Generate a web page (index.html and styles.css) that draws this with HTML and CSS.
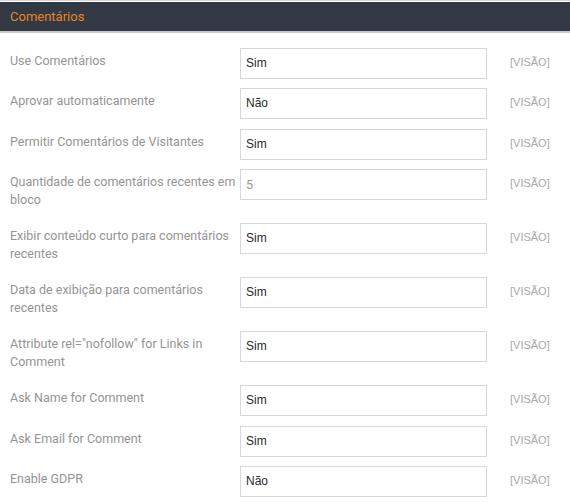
FILE: index.html
```html
<!DOCTYPE html>
<html>
<head>
<meta charset="utf-8">
<link rel="stylesheet" href="styles.css">
</head>
<body>
<div class="panel">
  <div class="panel-head">Comentários</div>
  <div class="form">
    <div class="row"><div class="label">Use Comentários</div><div class="field">Sim</div><div class="scope">[VISÃO]</div></div>
    <div class="row"><div class="label">Aprovar automaticamente</div><div class="field">Não</div><div class="scope">[VISÃO]</div></div>
    <div class="row"><div class="label">Permitir Comentários de Visitantes</div><div class="field">Sim</div><div class="scope">[VISÃO]</div></div>
    <div class="row"><div class="label">Quantidade de comentários recentes em bloco</div><div class="field num">5</div><div class="scope">[VISÃO]</div></div>
    <div class="row"><div class="label">Exibir conteúdo curto para comentários recentes</div><div class="field">Sim</div><div class="scope">[VISÃO]</div></div>
    <div class="row"><div class="label">Data de exibição para comentários recentes</div><div class="field">Sim</div><div class="scope">[VISÃO]</div></div>
    <div class="row"><div class="label">Attribute rel="nofollow" for Links in Comment</div><div class="field">Sim</div><div class="scope">[VISÃO]</div></div>
    <div class="row"><div class="label">Ask Name for Comment</div><div class="field">Sim</div><div class="scope">[VISÃO]</div></div>
    <div class="row"><div class="label">Ask Email for Comment</div><div class="field">Sim</div><div class="scope">[VISÃO]</div></div>
    <div class="row"><div class="label">Enable GDPR</div><div class="field">Não</div><div class="scope">[VISÃO]</div></div>
  </div>
</div>
</body>
</html>
```
FILE: styles.css
```css
html, body { margin: 0; padding: 0; background: #fff; }
body { font-family: Roboto, "Liberation Sans", sans-serif; }
.panel { border-top: 1px solid #d4d6db; padding-top: 1px; }
.panel-head {
  background: #333845;
  color: #e8861e;
  font-size: 13px;
  height: 31px;
  line-height: 30px;
  padding-left: 10px;
  border-bottom: 2px solid #c9cbd1;
  box-sizing: border-box;
}
.form { padding-top: 15px; }
.row {
  display: grid;
  grid-template-columns: 240px 247px auto;
  align-items: start;
  margin-bottom: 9.4px;
}
.label {
  color: #949494;
  font-size: 12.5px;
  line-height: 18px;
  padding: 4px 4px 4.6px 10px;
}
.field {
  height: 31px;
  box-sizing: border-box;
  border: 1px solid #d7d7dc;
  font-family: "Liberation Sans", Arial, sans-serif;
  font-size: 12px;
  color: #2a2a2a;
  line-height: 29px;
  padding-left: 5px;
}
.field.num { font-family: Roboto, sans-serif; color: #9a9a9a; font-size: 12.5px; }
.scope {
  font-family: "Liberation Sans", Arial, sans-serif;
  font-size: 11px;
  color: #a8a8a8;
  padding: 8px 0 0 23px;
}
```
